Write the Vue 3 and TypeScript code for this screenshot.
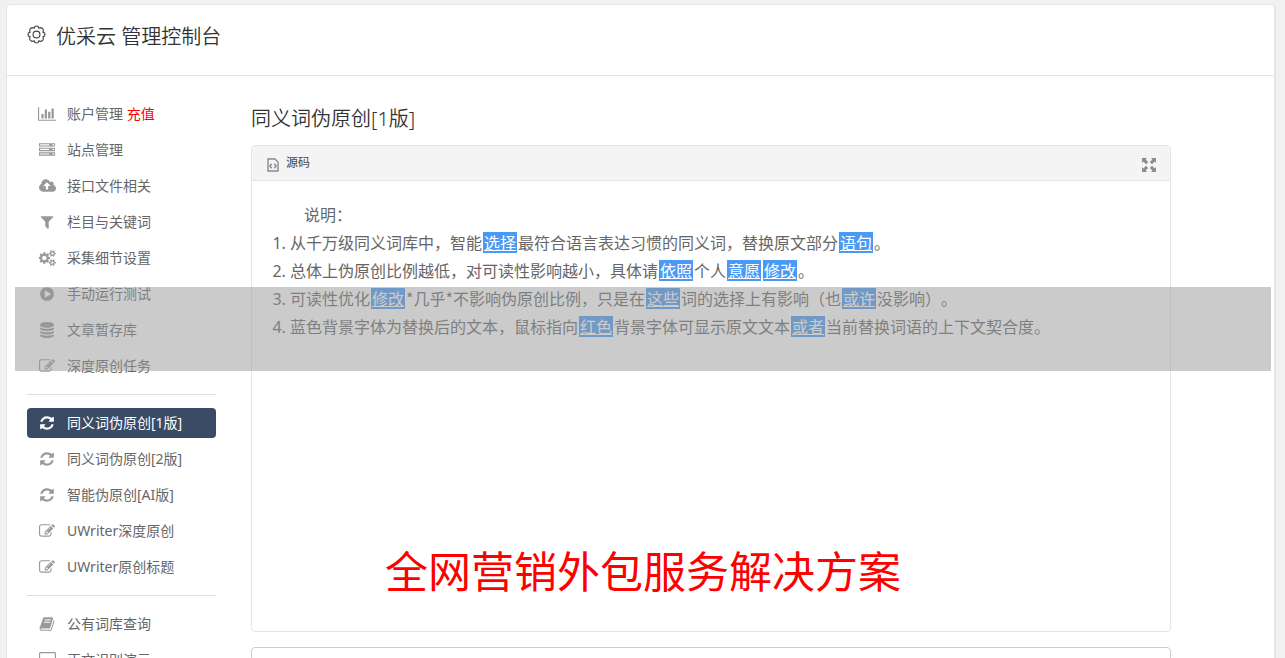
<script setup lang="ts">
interface Glyph {
  width: number
  path: string
}

interface NavItem {
  label: string
  icon: string
  badge?: string
  active?: boolean
}

interface Piece {
  text: string
  swapped?: boolean
}

const glyphs: Record<string, Glyph> = {
  chart: {
    width: 2048,
    path: 'M640 896v512h-256v-512h256zm384-512v1024h-256v-1024h256zm1024 1152v128h-2048v-1536h128v1408h1920zm-640-896v768h-256v-768h256zm384-384v1152h-256v-1152h256z',
  },
  server: {
    width: 1792,
    path: 'M128 1408h1024v-128h-1024v128zm0-512h1024v-128h-1024v128zm1568 448q0-40-28-68t-68-28-68 28-28 68 28 68 68 28 68-28 28-68zm-1568-960h1024v-128h-1024v128zm1568 448q0-40-28-68t-68-28-68 28-28 68 28 68 68 28 68-28 28-68zm0-512q0-40-28-68t-68-28-68 28-28 68 28 68 68 28 68-28 28-68zm96 832v384h-1792v-384h1792zm0-512v384h-1792v-384h1792zm0-512v384h-1792v-384h1792z',
  },
  upload: {
    width: 1920,
    path: 'M1280 864q0-14-9-23l-352-352q-9-9-23-9t-23 9l-351 351q-10 12-10 24 0 14 9 23t23 9h224v352q0 13 9.5 22.5t22.5 9.5h192q13 0 22.5-9.5t9.5-22.5v-352h224q13 0 22.5-9.5t9.5-22.5zm640 288q0 159-112.5 271.5t-271.5 112.5h-1088q-185 0-316.5-131.5t-131.5-316.5q0-130 70-240t188-165q-2-30-2-43 0-212 150-362t362-150q156 0 285.5 87t188.5 231q71-62 166-62 106 0 181 75t75 181q0 76-41 138 130 31 213.5 135.5t83.5 238.5z',
  },
  filter: {
    width: 1792,
    path: 'M1595 295q17 41-14 70l-493 493v742q0 42-39 59-13 5-25 5-27 0-45-19l-256-256q-19-19-19-45v-486l-493-493q-31-29-14-70 17-39 59-39h1280q42 0 59 39z',
  },
  cogs: {
    width: 1856,
    path: 'M832 896q0-106-75-181t-181-75-181 75-75 181 75 181 181 75 181-75 75-181zm768 512q0-52-38-90t-90-38-90 38-38 90q0 53 37.5 90.5t90.5 37.5 90.5-37.5 37.5-90.5zm0-1024q0-52-38-90t-90-38-90 38-38 90q0 53 37.5 90.5t90.5 37.5 90.5-37.5 37.5-90.5zm-384 421v185q0 10-7 19.5t-16 10.5l-155 24q-11 35-32 76 34 48 90 115 7 11 7 20 0 12-7 19-23 30-82.5 89.5t-78.5 59.5q-11 0-21-7l-115-90q-37 19-77 31-11 108-23 155-7 24-30 24h-186q-11 0-20-7.5t-10-17.5l-23-153q-34-10-75-31l-118 89q-7 7-20 7-11 0-21-8-144-133-144-160 0-9 7-19 10-14 41-53t47-61q-23-44-35-82l-152-24q-10-1-17-9.5t-7-19.5v-185q0-10 7-19.5t16-10.5l155-24q11-35 32-76-34-48-90-115-7-11-7-20 0-12 7-20 22-30 82-89t79-59q11 0 21 7l115 90q34-18 77-32 11-108 23-154 7-24 30-24h186q11 0 20 7.5t10 17.5l23 153q34 10 75 31l118-89q8-7 20-7 11 0 21 8 144 133 144 160 0 8-7 19-12 16-42 54t-45 60q23 48 34 82l152 23q10 2 17 10.5t7 19.5zm640 533v140q0 16-149 31-12 27-30 52 51 113 51 138 0 4-4 7-122 71-124 71-8 0-46-47t-52-68q-20 2-30 2t-30-2q-14 21-52 68t-46 47q-2 0-124-71-4-3-4-7 0-25 51-138-18-25-30-52-149-15-149-31v-140q0-16 149-31 13-29 30-52-51-113-51-138 0-4 4-7 4-2 35-20t59-34 30-16q8 0 46 46.5t52 67.5q20-2 30-2t30 2q51-71 92-112l6-2q4 0 124 70 4 3 4 7 0 25-51 138 17 23 30 52 149 15 149 31zm0-1024v140q0 16-149 31-12 27-30 52 51 113 51 138 0 4-4 7-122 71-124 71-8 0-46-47t-52-68q-20 2-30 2t-30-2q-14 21-52 68t-46 47q-2 0-124-71-4-3-4-7 0-25 51-138-18-25-30-52-149-15-149-31v-140q0-16 149-31 13-29 30-52-51-113-51-138 0-4 4-7 4-2 35-20t59-34 30-16q8 0 46 46.5t52 67.5q20-2 30-2t30 2q51-71 92-112l6-2q4 0 124 70 4 3 4 7 0 25-51 138 17 23 30 52 149 15 149 31z',
  },
  play: {
    width: 1792,
    path: 'M896 128q209 0 385.5 103t279.5 279.5 103 385.5-103 385.5-279.5 279.5-385.5 103-385.5-103-279.5-279.5-103-385.5 103-385.5 279.5-279.5 385.5-103zm384 823q32-18 32-55t-32-55l-544-320q-31-19-64-1-32 19-32 56v640q0 37 32 56 16 8 32 8 17 0 32-9z',
  },
  database: {
    width: 1792,
    path: 'M896 768q237 0 443-43t325-127v170q0 69-103 128t-280 93.5-385 34.5-385-34.5-280-93.5-103-128v-170q119 84 325 127t443 43zm0 768q237 0 443-43t325-127v170q0 69-103 128t-280 93.5-385 34.5-385-34.5-280-93.5-103-128v-170q119 84 325 127t443 43zm0-384q237 0 443-43t325-127v170q0 69-103 128t-280 93.5-385 34.5-385-34.5-280-93.5-103-128v-170q119 84 325 127t443 43zm0-1152q208 0 385 34.5t280 93.5 103 128v128q0 69-103 128t-280 93.5-385 34.5-385-34.5-280-93.5-103-128v-128q0-69 103-128t280-93.5 385-34.5z',
  },
  edit: {
    width: 1792,
    path: 'M888 1184l116-116-152-152-116 116v56h96v96h56zm440-720q-16-16-33 1l-350 350q-17 17-1 33t33-1l350-350q17-17 1-33zm80 594v190q0 119-84.5 203.5t-203.5 84.5h-832q-119 0-203.5-84.5t-84.5-203.5v-832q0-119 84.5-203.5t203.5-84.5h832q63 0 117 25 15 7 18 23 3 17-9 29l-49 49q-14 14-32 8-23-6-45-6h-832q-66 0-113 47t-47 113v832q0 66 47 113t113 47h832q66 0 113-47t47-113v-126q0-13 9-22l64-64q15-15 35-7t20 29zm-96-738l288 288-672 672h-288v-288zm444 132l-92 92-288-288 92-92q28-28 68-28t68 28l152 152q28 28 28 68t-28 68z',
  },
  refresh: {
    width: 1792,
    path: 'M1639 1056q0 5-1 7-64 268-268 434.5t-478 166.5q-146 0-282.5-55t-243.5-157l-129 129q-19 19-45 19t-45-19-19-45v-448q0-26 19-45t45-19h448q26 0 45 19t19 45-19 45l-137 137q71 66 161 102t187 36q134 0 250-65t186-179q11-17 53-117 8-23 30-23h192q13 0 22.5 9.5t9.5 22.5zm25-800v448q0 26-19 45t-45 19h-448q-26 0-45-19t-19-45 19-45l138-138q-148-137-349-137-134 0-250 65t-186 179q-11 17-53 117-8 23-30 23h-199q-13 0-22.5-9.5t-9.5-22.5v-7q65-268 270-434.5t480-166.5q146 0 284 55.5t245 156.5l130-129q19-19 45-19t45 19 19 45z',
  },
  book: {
    width: 1792,
    path: 'M1703 478q40 57 18 129l-275 906q-19 64-76.5 107.5t-122.5 43.5h-923q-77 0-148.5-53.5t-99.5-131.5q-24-67-2-127 0-4 3-27t4-37q1-8-3-21.5t-3-19.5q2-11 8-21t16.5-23.5 16.5-23.5q23-38 45-91.5t30-91.5q3-10 .5-30t-.5-28q3-11 17-28t17-23q21-36 42-92t25-90q1-9-2.5-32t.5-28q4-13 22-30.5t22-22.5q19-26 42.5-84.5t27.5-96.5q1-8-3-25.5t-2-26.5q2-8 9-18t18-23 17-21q8-12 16.5-30.5t15-35 16-36 19.5-32 26.5-23.5 36-11.5 47.5 5.5l-1 3q38-9 51-9h761q74 0 114 56t18 130l-274 906q-36 119-71.5 153.5t-128.5 34.5h-869q-27 0-38 15-11 16-1 43 24 70 144 70h923q29 0 56-15.5t35-41.5l300-987q7-22 5-57 38 15 59 43zm-1064 2q-4 13 2 22.5t20 9.5h608q13 0 25.5-9.5t16.5-22.5l21-64q4-13-2-22.5t-20-9.5h-608q-13 0-25.5 9.5t-16.5 22.5zm-83 256q-4 13 2 22.5t20 9.5h608q13 0 25.5-9.5t16.5-22.5l21-64q4-13-2-22.5t-20-9.5h-608q-13 0-25.5 9.5t-16.5 22.5z',
  },
  desktop: {
    width: 1920,
    path: 'M1792 992v-832q0-13-9.5-22.5t-22.5-9.5h-1600q-13 0-22.5 9.5t-9.5 22.5v832q0 13 9.5 22.5t22.5 9.5h1600q13 0 22.5-9.5t9.5-22.5zm128-832v1088q0 66-47 113t-113 47h-544q0 37 16 77.5t32 71 16 43.5q0 26-19 45t-45 19h-512q-26 0-45-19t-19-45q0-14 16-44t32-70 16-78h-544q-66 0-113-47t-47-113v-1088q0-66 47-113t113-47h1600q66 0 113 47t47 113z',
  },
}

const navGroups: NavItem[][] = [
  [
    { label: '账户管理', icon: 'chart', badge: '充值' },
    { label: '站点管理', icon: 'server' },
    { label: '接口文件相关', icon: 'upload' },
    { label: '栏目与关键词', icon: 'filter' },
    { label: '采集细节设置', icon: 'cogs' },
    { label: '手动运行测试', icon: 'play' },
    { label: '文章暂存库', icon: 'database' },
    { label: '深度原创任务', icon: 'edit' },
  ],
  [
    { label: '同义词伪原创[1版]', icon: 'refresh', active: true },
    { label: '同义词伪原创[2版]', icon: 'refresh' },
    { label: '智能伪原创[AI版]', icon: 'refresh' },
    { label: 'UWriter深度原创', icon: 'edit' },
    { label: 'UWriter原创标题', icon: 'edit' },
  ],
  [
    { label: '公有词库查询', icon: 'book' },
    { label: '正文识别演示', icon: 'desktop' },
  ],
]

// Words wrapped in braces are the ones replaced by a synonym.
const notes: string[] = [
  '从千万级同义词库中，智能{选择}最符合语言表达习惯的同义词，替换原文部分{语句}。',
  '总体上伪原创比例越低，对可读性影响越小，具体请{依照}个人{意愿}{修改}。',
  '可读性优化{修改}*几乎*不影响伪原创比例，只是在{这些}词的选择上有影响（也{或许}没影响）。',
  '蓝色背景字体为替换后的文本，鼠标指向{红色}背景字体可显示原文文本{或者}当前替换词语的上下文契合度。',
]

function split(line: string): Piece[] {
  return line
    .split(/(\{[^}]+\})/)
    .filter((part) => part.length > 0)
    .map((part) =>
      part.startsWith('{') ? { text: part.slice(1, -1), swapped: true } : { text: part },
    )
}

const noteLines: Piece[][] = notes.map(split)
</script>

<template>
  <div class="page">
    <div class="card">
      <header class="card-head">
        <svg class="gear" viewBox="0 0 20 20" aria-hidden="true">
          <path
            d="M8.3 1.5Q10 .7 11.7 1.5L12.3 3.2L14.8 2.8Q16.6 3.4 17.2 5.2L16.8 7.7L18.5 8.3Q19.3 10 18.5 11.7L16.8 12.3L17.2 14.8Q16.6 16.6 14.8 17.2L12.3 16.8L11.7 18.5Q10 19.3 8.3 18.5L7.7 16.8L5.2 17.2Q3.4 16.6 2.8 14.8L3.2 12.3L1.5 11.7Q.7 10 1.5 8.3L3.2 7.7L2.8 5.2Q3.4 3.4 5.2 2.8L7.7 3.2Z"
          />
          <circle cx="10" cy="10" r="3.6" />
        </svg>
        <h1>优采云 管理控制台</h1>
      </header>

      <div class="card-body">
        <nav class="sidebar">
          <ul v-for="(group, g) in navGroups" :key="g">
            <li v-for="item in group" :key="item.label">
              <a href="#" :class="{ active: item.active }">
                <span class="icon">
                  <svg
                    :width="Math.round(glyphs[item.icon].width / 112)"
                    height="16"
                    :viewBox="`0 0 ${glyphs[item.icon].width} 1792`"
                    aria-hidden="true"
                  >
                    <path :d="glyphs[item.icon].path" />
                  </svg>
                </span>
                <span>{{ item.label }} <em v-if="item.badge">{{ item.badge }}</em></span>
              </a>
            </li>
          </ul>
        </nav>

        <main>
          <h2>同义词伪原创[1版]</h2>
          <section class="editor">
            <div class="toolbar">
              <button type="button" class="source">
                <svg width="12" height="14" viewBox="0 0 12 14" aria-hidden="true">
                  <path class="sheet" d="M1 1H8L11 4V13H1Z" />
                  <path class="code" d="M4.7 5.8L2.9 8L4.7 10.2M7.3 5.8L9.1 8L7.3 10.2" />
                </svg>
                <span>源码</span>
              </button>
              <button type="button" class="maximize" aria-label="全屏">
                <svg width="14" height="14" viewBox="0 0 14 14" aria-hidden="true">
                  <path
                    d="M0 0H5L3.6 1.4L6.2 4L4 6.2L1.4 3.6L0 5ZM14 0V5L12.6 3.6L10 6.2L7.8 4L10.4 1.4L9 0ZM0 14V9L1.4 10.4L4 7.8L6.2 10L3.6 12.6L5 14ZM14 14H9L10.4 12.6L7.8 10L10 7.8L12.6 10.4L14 9Z"
                  />
                </svg>
              </button>
            </div>
            <div class="content">
              <p>说明：</p>
              <ol>
                <li v-for="(line, n) in noteLines" :key="n">
                  <template v-for="(piece, p) in line" :key="p"
                    ><u v-if="piece.swapped">{{ piece.text }}</u
                    ><template v-else>{{ piece.text }}</template></template
                  >
                </li>
              </ol>
            </div>
          </section>
          <textarea class="result" aria-label="结果"></textarea>
        </main>
      </div>
    </div>

    <div class="band"></div>
    <p class="slogan">全网营销外包服务解决方案</p>
  </div>
</template>

<style>
body {
  background: #f1f1f1;
}
</style>

<style scoped>
* {
  box-sizing: border-box;
}

.page {
  position: relative;
  height: 100vh;
  overflow: hidden;
  padding: 4px 9px 0 6px;
  color: #666;
  font-family: 'Noto Sans', 'Noto Sans CJK SC', sans-serif;
  font-size: 14px;
}

.card {
  min-height: 100%;
  background: #fff;
  border: 1px solid #e5e5e5;
  border-right-width: 2px;
  border-radius: 5px;
}

.card-head {
  display: flex;
  align-items: flex-start;
  gap: 10px;
  height: 71px;
  padding: 17px 20px 0;
  border-bottom: 1px solid #e5e5e5;
}

.gear {
  width: 19px;
  height: 19px;
  margin-top: 3px;
  fill: none;
  stroke: #444;
  stroke-width: 1.2;
}

h1,
h2 {
  margin: 0;
  color: #333;
  font-size: 20px;
  font-weight: 350;
  line-height: 30px;
}

.card-body {
  display: flex;
  gap: 35px;
  padding: 23px 103px 0 20px;
}

.sidebar {
  flex: 0 0 189px;
}

.sidebar ul {
  display: flex;
  flex-direction: column;
  gap: 6px;
  margin: 0;
  padding: 0;
  list-style: none;
}

.sidebar ul + ul {
  margin-top: 13px;
  padding-top: 13px;
  border-top: 1px solid #ddd;
}

.sidebar a {
  display: flex;
  align-items: center;
  gap: 10px;
  height: 30px;
  padding-left: 10px;
  border-radius: 4px;
  color: #666;
  line-height: 30px;
  text-decoration: none;
}

.sidebar em {
  color: #f00;
  font-style: normal;
}

.icon {
  display: flex;
  justify-content: center;
  width: 20px;
  fill: #999;
}

.sidebar a.active {
  background: #3a4b66;
  color: #fff;
}

.active .icon {
  fill: #fff;
}

main {
  flex: 1;
  min-width: 0;
  padding-top: 5px;
}

.editor {
  min-height: 487px;
  margin-top: 11px;
  border: 1px solid #e5e5e5;
  border-radius: 4px;
}

.toolbar {
  display: flex;
  align-items: center;
  justify-content: space-between;
  height: 35px;
  padding: 0 14px 0 15px;
  background: #f4f4f4;
  border-bottom: 1px solid #e5e5e5;
  border-radius: 3px 3px 0 0;
}

.toolbar button {
  display: flex;
  align-items: center;
  gap: 7px;
  padding: 0;
  border: 0;
  background: none;
  color: #444;
  font: inherit;
  font-size: 12px;
  line-height: 20px;
}

.toolbar svg {
  margin-top: 4px;
}

.sheet,
.code {
  fill: none;
  stroke: #8a8a8a;
  stroke-width: 1.4;
}

.maximize {
  fill: #8c8c8c;
}

.content {
  padding: 19px 20px;
  font-family: 'Noto Sans CJK SC', sans-serif;
  font-size: 16px;
  line-height: 28px;
  text-spacing-trim: space-all;
}

.content p {
  margin: 0;
  text-indent: 32px;
}

.content ol {
  margin: 0;
  padding-left: 18px;
}

.content li::marker {
  font-family: 'Noto Sans', sans-serif;
}

.content u {
  display: inline-block;
  margin: 0 1px;
  padding: 0 1px;
  background: #4a9af5;
  color: #fff;
  line-height: 21px;
  text-decoration: underline;
}

.result {
  display: block;
  width: 100%;
  height: 160px;
  margin-top: 15px;
  border: 1px solid #ccc;
  border-radius: 4px;
  resize: none;
}

.band {
  position: absolute;
  top: 287px;
  right: 14px;
  left: 15px;
  height: 84px;
  background: rgba(151, 151, 151, 0.5);
}

.slogan {
  position: absolute;
  top: 542px;
  right: 14px;
  left: 15px;
  margin: 0;
  color: #f00;
  font-size: 43px;
  line-height: 60px;
  text-align: center;
}
</style>
